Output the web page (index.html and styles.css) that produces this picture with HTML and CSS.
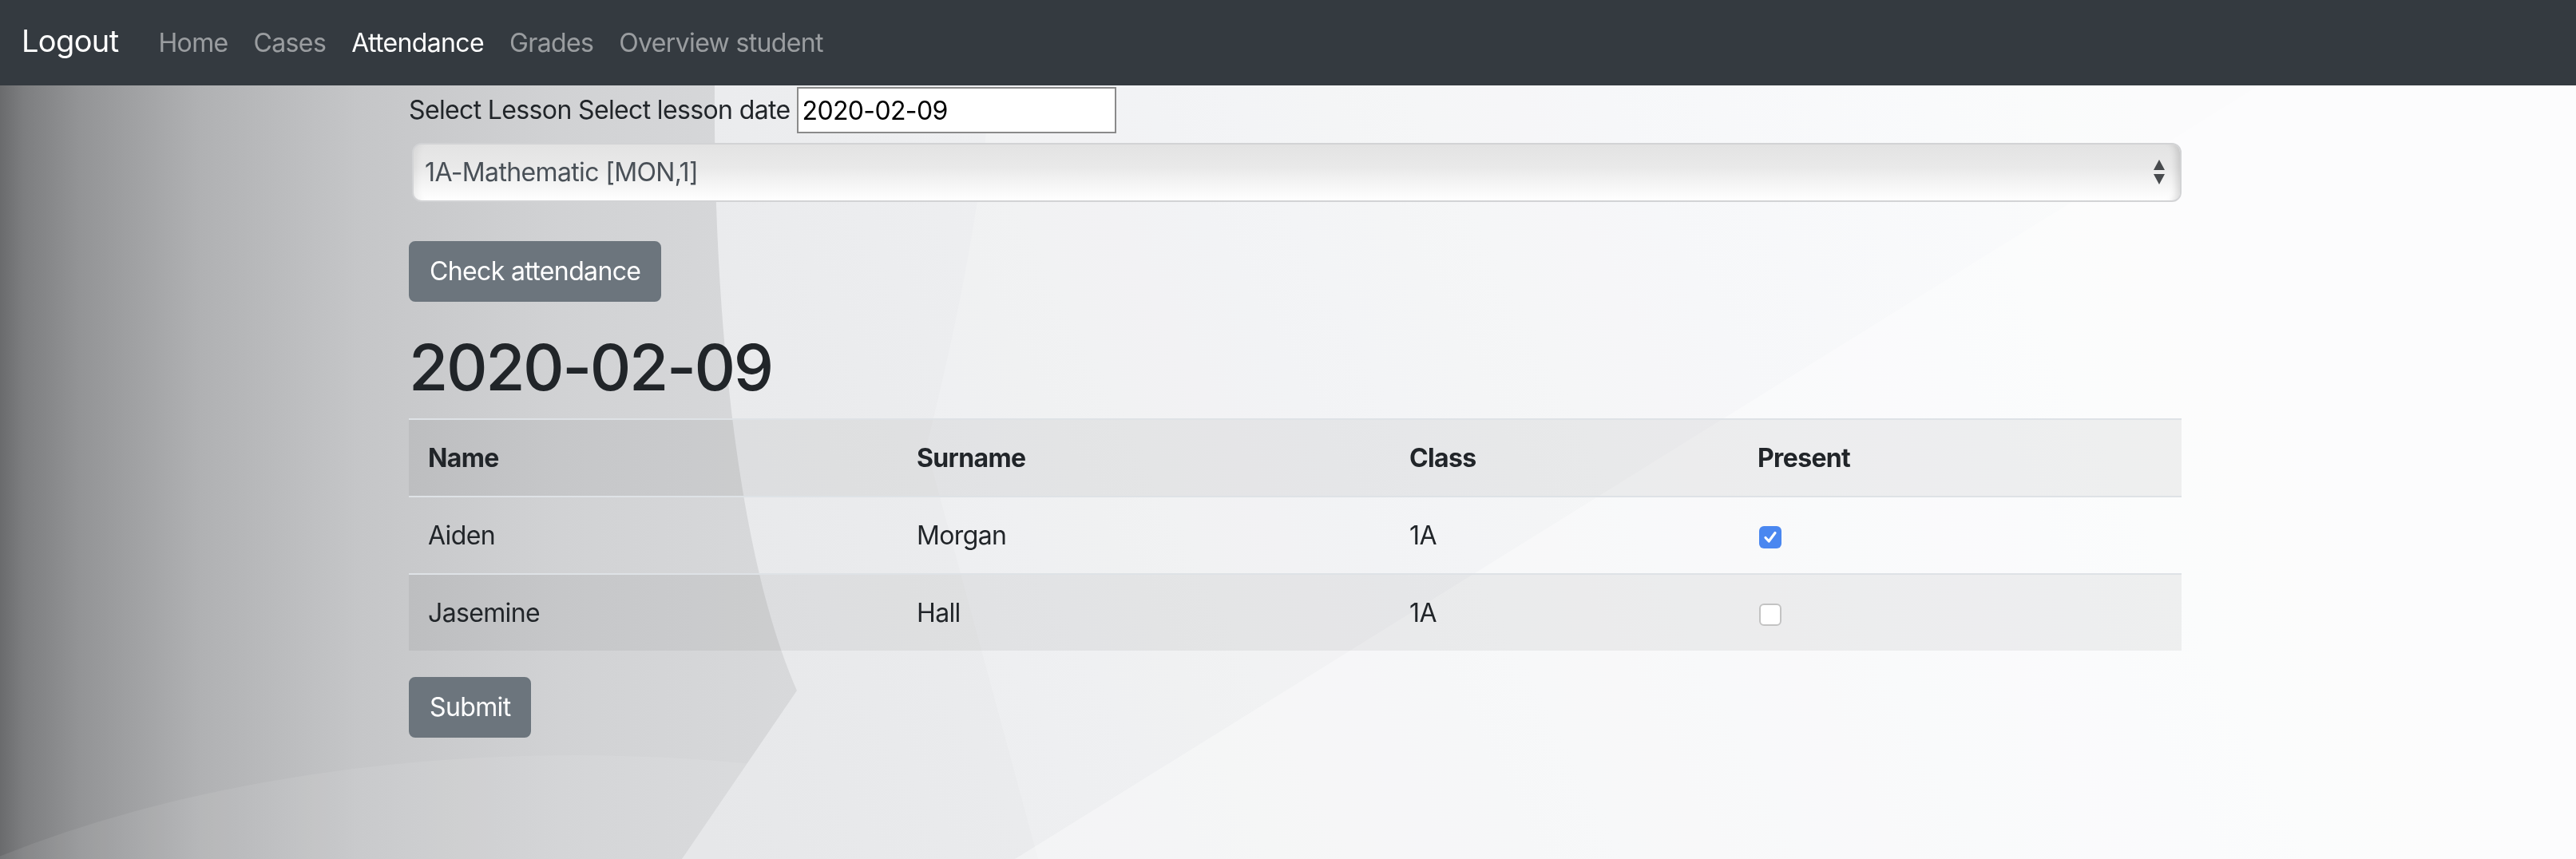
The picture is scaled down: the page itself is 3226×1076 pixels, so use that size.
FILE: index.html
```html
<!DOCTYPE html>
<html lang="en">
<head>
<meta charset="utf-8">
<title>Attendance</title>
<link rel="stylesheet" href="styles.css">
</head>
<body>
<svg class="bg" viewBox="0 0 3226 1076" preserveAspectRatio="none" aria-hidden="true">
  <defs>
    <linearGradient id="gl" x1="0" y1="0" x2="1000" y2="0" gradientUnits="userSpaceOnUse">
      <stop offset="0" stop-color="#6a6b6d"/>
      <stop offset="0.03" stop-color="#7d7e80"/>
      <stop offset="0.1" stop-color="#939496"/>
      <stop offset="0.25" stop-color="#b0b1b3"/>
      <stop offset="0.45" stop-color="#c5c6c8"/>
      <stop offset="0.7" stop-color="#d1d2d4"/>
      <stop offset="1" stop-color="#d8d9db"/>
    </linearGradient>
    <linearGradient id="gm" x1="900" y1="1076" x2="2700" y2="150" gradientUnits="userSpaceOnUse">
      <stop offset="0" stop-color="#e6e7e9"/>
      <stop offset="0.35" stop-color="#eeeff1"/>
      <stop offset="0.7" stop-color="#f5f6f8"/>
      <stop offset="1" stop-color="#fafbfc"/>
    </linearGradient>
  </defs>
  <rect x="0" y="0" width="3226" height="1076" fill="url(#gl)"/>
  <ellipse cx="720" cy="1520" rx="1150" ry="574" fill="#ffffff" fill-opacity="0.08"/>
  <path d="M895 107 C 893 400, 925 700, 998 865 L 854 1076 L 3226 1076 L 3226 107 Z" fill="url(#gm)"/>
  <path d="M1240 107 C 1230 250, 1200 400, 1160 560 L 1300 1076 L 3226 1076 L 3226 107 Z" fill="#ffffff" fill-opacity="0.18"/>
  <path d="M2829 107 L 1271 1076 L 3226 1076 L 3226 107 Z" fill="#ffffff" fill-opacity="0.35"/>
</svg>

<nav class="navbar">
  <a class="brand" href="#">Logout</a>
  <ul class="nav">
    <li><a class="nav-link" href="#">Home</a></li>
    <li><a class="nav-link" href="#">Cases</a></li>
    <li><a class="nav-link active" href="#">Attendance</a></li>
    <li><a class="nav-link" href="#">Grades</a></li>
    <li><a class="nav-link" href="#">Overview student</a></li>
  </ul>
</nav>

<main class="container">
  <div class="lesson-row">
    <label class="lesson-label" for="date">Select Lesson Select lesson date</label>
    <input class="date-input" id="date" type="text" value="2020-02-09">
  </div>

  <div class="lesson-select">
    <span class="select-text">1A-Mathematic [MON,1]</span>
    <svg class="select-arrows" width="16" height="34" viewBox="0 0 16 34" aria-hidden="true">
      <path d="M8 1 L15 14 L1 14 Z" fill="#474a4d"/>
      <path d="M1 19 L15 19 L8 32 Z" fill="#474a4d"/>
    </svg>
  </div>

  <button class="btn btn-check" type="button">Check attendance</button>

  <h1 class="date-title">2020-02-09</h1>

  <table class="att-table">
    <colgroup>
      <col class="c-name">
      <col class="c-surname">
      <col class="c-class">
      <col class="c-present">
    </colgroup>
    <tbody>
      <tr class="striped">
        <th>Name</th>
        <th>Surname</th>
        <th>Class</th>
        <th>Present</th>
      </tr>
      <tr>
        <td>Aiden</td>
        <td>Morgan</td>
        <td>1A</td>
        <td><span class="check checked"><svg width="28" height="28" viewBox="0 0 28 28" aria-hidden="true"><path d="M8 14.5 L12.2 19 L20 8.5" fill="none" stroke="#fff" stroke-width="3.2" stroke-linecap="round" stroke-linejoin="round"/></svg></span></td>
      </tr>
      <tr class="striped">
        <td>Jasemine</td>
        <td>Hall</td>
        <td>1A</td>
        <td><span class="check"></span></td>
      </tr>
    </tbody>
  </table>

  <button class="btn btn-submit" type="submit">Submit</button>
</main>
</body>
</html>
```

FILE: styles.css
```css
html, body {
  margin: 0;
  padding: 0;
}

body {
  font-family: Inter, "Noto Sans", "Liberation Sans", sans-serif;
  font-size: 32px;
  line-height: 48px;
  letter-spacing: -0.02em;
  color: #212529;
  min-height: 1076px;
  background: #f5f6f8;
}

.bg {
  position: fixed;
  top: 0;
  left: 0;
  width: 100%;
  height: 100%;
  z-index: -1;
}

/* navbar */
.navbar {
  display: flex;
  align-items: center;
  height: 107px;
  box-sizing: border-box;
  padding: 0 27px;
  background: #343a40;
}

.brand {
  color: #fff;
  font-size: 38px;
  line-height: 60px;
  margin-right: 34px;
  margin-bottom: 6px;
  text-decoration: none;
}

.nav {
  display: flex;
  list-style: none;
  margin: 0;
  padding: 0;
}

.nav-link {
  display: block;
  padding: 0 16px;
  color: rgba(255, 255, 255, 0.5);
  text-decoration: none;
}

.nav-link.active {
  color: #fff;
}

/* content */
.container {
  width: 2220px;
  margin-left: 512px;
}

.lesson-row {
  display: flex;
  align-items: center;
  gap: 8px;
  height: 58px;
  margin-top: 2px;
}

.date-input {
  width: 400px;
  height: 58px;
  box-sizing: border-box;
  border: 2px solid #8a8a8a;
  border-radius: 0;
  background: #fff;
  color: #000;
  font: inherit;
  letter-spacing: -0.02em;
  padding: 0 5px;
  margin: 0;
}

.lesson-select {
  display: flex;
  align-items: center;
  justify-content: space-between;
  height: 74px;
  box-sizing: border-box;
  margin: 12px 0 0 4px;
  padding: 0 18px 0 14px;
  border: 2px solid #d2d3d5;
  border-radius: 12px;
  color: #495057;
  background: linear-gradient(#e3e3e3 0%, #e9e9e9 40%, #f6f6f6 75%, #ffffff 100%);
  box-shadow: inset 12px 0 10px -8px rgba(0, 0, 0, 0.06), inset -12px 0 10px -8px rgba(0, 0, 0, 0.14);
}

.select-arrows {
  display: block;
}

.btn {
  display: block;
  font: inherit;
  letter-spacing: -0.02em;
  line-height: 48px;
  color: #fff;
  background: #6c757d;
  border: 2px solid #6c757d;
  border-radius: 8px;
  padding: 12px 24px;
  margin: 0;
}

.btn-check {
  margin-top: 49px;
}

.date-title {
  font-size: 80px;
  line-height: 96px;
  font-weight: 500;
  letter-spacing: -0.03em;
  margin: 34px 0 16px;
}

.att-table {
  width: 2220px;
  border-collapse: collapse;
  table-layout: fixed;
}

.c-name { width: 612px; }
.c-surname { width: 617px; }
.c-class { width: 436px; }
.c-present { width: 555px; }

.att-table th,
.att-table td {
  padding: 24px;
  line-height: 47px;
  border-top: 2px solid #dee2e6;
  text-align: left;
  vertical-align: middle;
}

.att-table th {
  font-weight: 700;
}

.att-table tr.striped {
  background: rgba(0, 0, 0, 0.05);
}

.check {
  display: inline-block;
  width: 28px;
  height: 28px;
  box-sizing: border-box;
  border: 2px solid #c3c3c3;
  border-radius: 6px;
  background: #fff;
  vertical-align: middle;
  margin-left: 2px;
}

.check.checked {
  border: none;
  background: #4a87f0;
}

.check svg {
  display: block;
}

.btn-submit {
  margin-top: 33px;
}
```
